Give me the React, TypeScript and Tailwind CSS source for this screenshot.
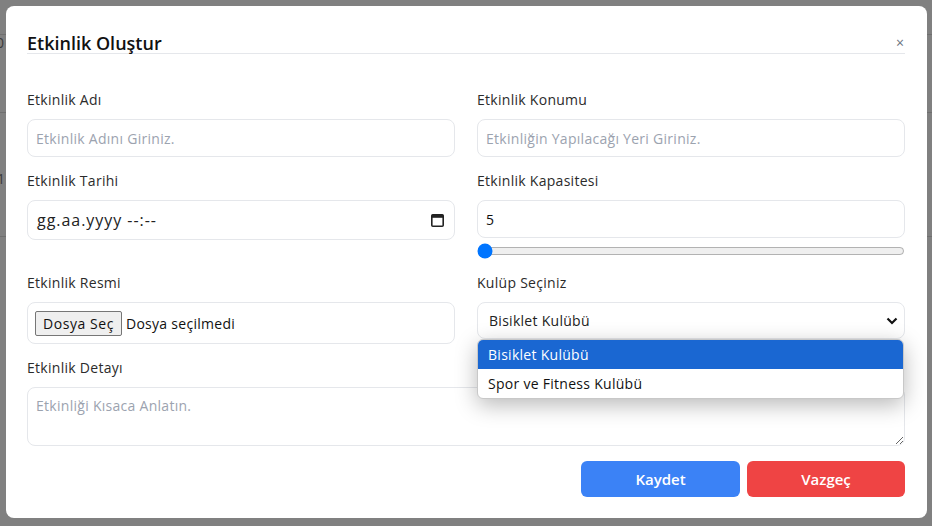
import React from "react";

const font = { fontFamily: "'Open Sans', 'Noto Sans', sans-serif" };

function Label({ children }: { children: React.ReactNode }) {
  return <div className="text-[14px] leading-[20px] tracking-[0.02em] text-[#2b2b2b] mb-[9px]">{children}</div>;
}

export default function App() {
  return (
    <div className="relative w-[932px] h-[526px] bg-[#808080] overflow-hidden" style={font}>
      {/* page behind overlay */}
      <div className="absolute inset-0 flex flex-col">
        <div className="h-[35px] border-b border-[#6f6f6f]" />
        <div className="h-[78px] border-b border-[#6f6f6f]" />
        <div className="h-[124px] border-b border-[#6f6f6f]" />
      </div>
      <div className="absolute left-[-4px] top-[32px] text-[14px] text-[#3a3a3a]">0</div>
      <div className="absolute left-[-3px] top-[168px] text-[14px] text-[#3a3a3a]">1</div>

      <div className="relative pl-[6px] pt-[6px]">
        <div className="w-[921px] h-[512px] bg-white rounded-[8px] pl-[21px] pr-[22px]">
          {/* header */}
          <div className="flex items-center justify-between pt-[26px] border-b border-[#e5e7eb] h-[48px]">
            <div className="text-[18px] leading-[26px] font-semibold text-[#111]">Etkinlik Oluştur</div>
            <div className="text-[14px] leading-[26px] text-[#6b7280] pr-[1px]">×</div>
          </div>

          <div className="grid grid-cols-2 gap-x-[22px] mt-[36px] tracking-[0.02em]">
            {/* row 1 */}
            <div>
              <Label>Etkinlik Adı</Label>
              <input
                className="w-full h-[38px] rounded-[8px] border border-[#e5e7eb] px-[8px] text-[14px] tracking-[0.02em] placeholder:text-[#9ca3af] outline-none"
                placeholder="Etkinlik Adını Giriniz."
              />
            </div>
            <div>
              <Label>Etkinlik Konumu</Label>
              <input
                className="w-full h-[38px] rounded-[8px] border border-[#e5e7eb] px-[8px] text-[14px] tracking-[0.02em] placeholder:text-[#9ca3af] outline-none"
                placeholder="Etkinliğin Yapılacağı Yeri Giriniz."
              />
            </div>

            {/* row 2 */}
            <div className="mt-[14px]">
              <Label>Etkinlik Tarihi</Label>
              <div className="w-full h-[40px] rounded-[8px] border border-[#e5e7eb] pl-[9px] pr-[10px] flex items-center justify-between">
                <span className="text-[16px] tracking-[0.06em] text-[#222]">gg.aa.yyyy --:--</span>
                <svg width="13" height="14" viewBox="0 0 13 14">
                  <rect x="0.8" y="1.8" width="11.4" height="11.4" rx="1" fill="none" stroke="#222" strokeWidth="1.6" />
                  <rect x="0.8" y="1.8" width="11.4" height="3" fill="#222" />
                </svg>
              </div>
            </div>
            <div className="mt-[14px]">
              <Label>Etkinlik Kapasitesi</Label>
              <input
                className="w-full h-[38px] rounded-[8px] border border-[#e5e7eb] px-[8px] text-[14px] text-[#111] outline-none"
                defaultValue="5"
              />
              <div className="mt-[4px] h-[18px] flex items-center">
                <input type="range" min={5} max={100} defaultValue={5} className="w-full m-0" />
              </div>
            </div>

            {/* row 3 */}
            <div className="mt-[13px]">
              <Label>Etkinlik Resmi</Label>
              <div className="w-full h-[42px] rounded-[8px] border border-[#e5e7eb] pl-[7px] flex items-center">
                <span className="h-[25px] px-[7px] flex items-center bg-[#efefef] border border-[#767676] rounded-[2px] text-[14px] tracking-[0.04em] text-[#111]">
                  Dosya Seç
                </span>
                <span className="ml-[4px] text-[14px] tracking-[0.02em] text-[#111]">Dosya seçilmedi</span>
              </div>
            </div>
            <div className="mt-[13px] relative z-10">
              <Label>Kulüp Seçiniz</Label>
              <div className="relative">
                <div className="w-full h-[37px] rounded-[8px] border border-[#e5e7eb] pl-[11px] pr-[6px] flex items-center justify-between">
                  <span className="text-[14px] tracking-[0.02em] text-[#222]">Bisiklet Kulübü</span>
                  <svg width="12" height="8" viewBox="0 0 12 8">
                    <path d="M1.5 1.5 L6 6 L10.5 1.5" fill="none" stroke="#111" strokeWidth="2.2" />
                  </svg>
                </div>
                <div className="absolute left-0 right-[1px] top-full bg-white rounded-[6px] border border-[#c8c8c8] overflow-hidden shadow-[0_6px_22px_rgba(0,0,0,0.28)]">
                  <div className="h-[29px] pl-[10px] flex items-center bg-[#1a67d2] text-white text-[14px] tracking-[0.02em]">Bisiklet Kulübü</div>
                  <div className="h-[29px] pl-[10px] flex items-center text-[#111] text-[14px] tracking-[0.02em]">Spor ve Fitness Kulübü</div>
                </div>
              </div>
            </div>

            {/* row 4 */}
            <div className="col-span-2 mt-[14px]">
              <Label>Etkinlik Detayı</Label>
              <textarea
                className="block w-full h-[59px] rounded-[8px] border border-[#e5e7eb] px-[8px] pt-[8px] text-[14px] leading-[20px] tracking-[0.02em] placeholder:text-[#9ca3af] outline-none"
                placeholder="Etkinliği Kısaca Anlatın."
              />
            </div>
          </div>

          {/* footer */}
          <div className="flex justify-end gap-[7px] mt-[15px]">
            <button className="w-[159px] h-[36px] rounded-[6px] bg-[#3b82f6] text-white text-[15px] font-semibold">Kaydet</button>
            <button className="w-[158px] h-[36px] rounded-[6px] bg-[#ef4444] text-white text-[15px] font-semibold">Vazgeç</button>
          </div>
        </div>
      </div>
    </div>
  );
}
